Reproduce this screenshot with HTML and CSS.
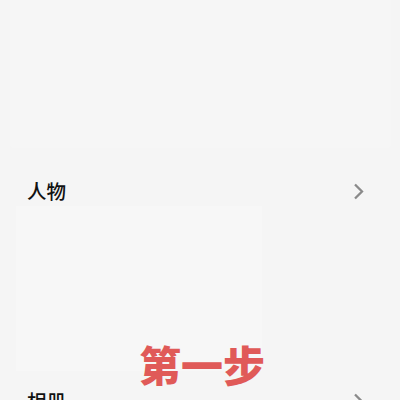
FILE: index.html
```html
<!DOCTYPE html>
<html>
<head>
<meta charset="utf-8">
<link rel="stylesheet" href="styles.css">
</head>
<body>
<div class="page">
  <div class="top-card"></div>
  <div class="row">
    <span class="label">人物</span>
    <svg class="chev" width="12" height="17" viewBox="0 0 12 17"><path d="M2 1.5 L9 8.5 L2 15.5" fill="none" stroke="#8a8a8a" stroke-width="2.3"/></svg>
  </div>
  <div class="thumb"></div>
  <div class="row row2">
    <span class="label">相册</span>
    <svg class="chev" width="12" height="17" viewBox="0 0 12 17"><path d="M2 1.5 L9 8.5 L2 15.5" fill="none" stroke="#8a8a8a" stroke-width="2.3"/></svg>
  </div>
  <div class="step">第一步</div>
</div>
</body>
</html>
```
FILE: styles.css
```css
html, body {
  margin: 0;
  padding: 0;
  background: #f5f5f5;
  overflow: hidden;
}
.page {
  position: relative;
  width: 400px;
  height: 400px;
  overflow: hidden;
  font-family: "Noto Sans CJK SC", "Noto Sans", sans-serif;
}
.top-card {
  margin: 0 9px 0 10px;
  height: 148px;
  background: #f6f6f6;
  border-radius: 0 0 4px 4px;
}
.row {
  display: flex;
  align-items: center;
  justify-content: space-between;
  padding: 32px 35px 4px 27px;
  height: 22px;
}
.label {
  font-size: 19.5px;
  font-weight: 500;
  color: #111;
  line-height: 22px;
}
.chev {
  display: block;
}
.thumb {
  margin-left: 16px;
  width: 246px;
  height: 165px;
  background: #f7f7f7;
}
.row2 {
  padding-top: 19px;
}
.step {
  position: absolute;
  left: 139px;
  top: 339px;
  font-size: 42px;
  font-weight: 900;
  color: #e05a58;
  line-height: 1.2;
}
```
